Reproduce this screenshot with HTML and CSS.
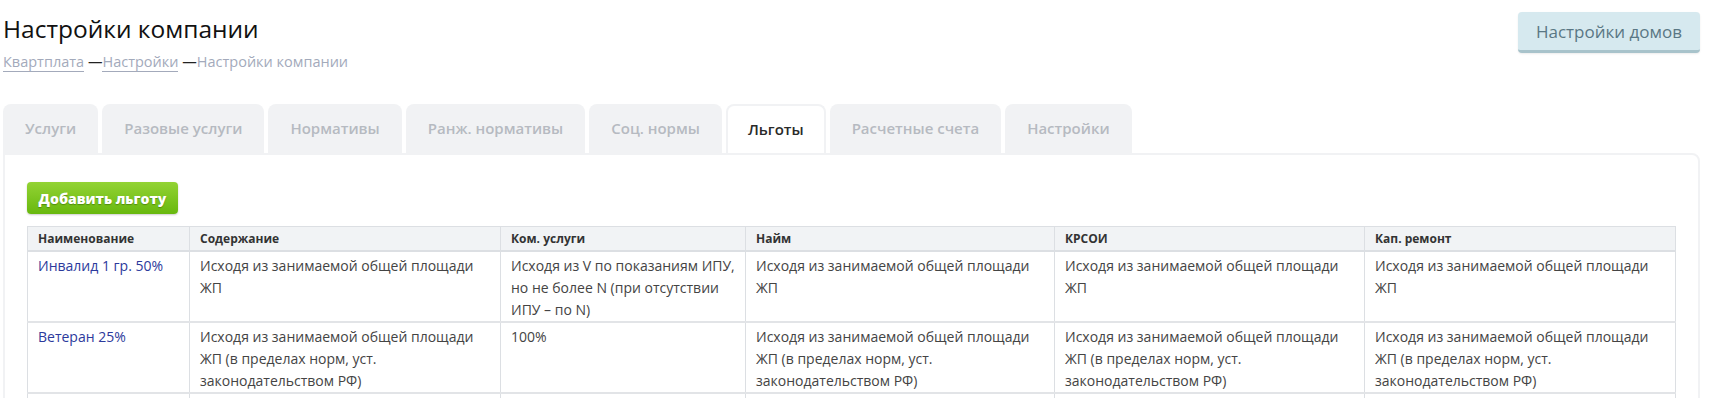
FILE: index.html
```html
<html>
<head>
    <title>Настройки компании</title>
    <link rel="stylesheet" href="styles.css">
</head>
<body>
<div class="page">
    <div class="topBar">
        <div>
            <h1>Настройки компании</h1>
            <div class="crumbs">
                <a href="#">Квартплата</a> <span class="dash">—</span><a href="#">Настройки</a> <span class="dash">—</span><span class="current">Настройки компании</span>
            </div>
        </div>
        <button class="housesBtn">Настройки домов</button>
    </div>

    <ul class="tabs">
        <li>Услуги</li>
        <li>Разовые услуги</li>
        <li>Нормативы</li>
        <li>Ранж. нормативы</li>
        <li>Соц. нормы</li>
        <li class="active">Льготы</li>
        <li>Расчетные счета</li>
        <li>Настройки</li>
    </ul>

    <div class="panel">
        <button class="addBtn">Добавить льготу</button>

        <table class="grid">
            <colgroup>
                <col style="width:162px">
                <col style="width:311px">
                <col style="width:245px">
                <col style="width:309px">
                <col style="width:310px">
                <col>
            </colgroup>
            <thead>
                <tr>
                    <th>Наименование</th>
                    <th>Содержание</th>
                    <th>Ком. услуги</th>
                    <th>Найм</th>
                    <th>КРСОИ</th>
                    <th>Кап. ремонт</th>
                </tr>
            </thead>
            <tbody>
                <tr>
                    <td><a href="#">Инвалид 1 гр. 50%</a></td>
                    <td>Исходя из занимаемой общей площади ЖП</td>
                    <td>Исходя из V по показаниям ИПУ, но не более N (при отсутствии ИПУ – по N)</td>
                    <td>Исходя из занимаемой общей площади ЖП</td>
                    <td>Исходя из занимаемой общей площади ЖП</td>
                    <td>Исходя из занимаемой общей площади ЖП</td>
                </tr>
                <tr>
                    <td><a href="#">Ветеран 25%</a></td>
                    <td>Исходя из занимаемой общей площади ЖП (в пределах норм, уст. законодательством РФ)</td>
                    <td>100%</td>
                    <td>Исходя из занимаемой общей площади ЖП (в пределах норм, уст. законодательством РФ)</td>
                    <td>Исходя из занимаемой общей площади ЖП (в пределах норм, уст. законодательством РФ)</td>
                    <td>Исходя из занимаемой общей площади ЖП (в пределах норм, уст. законодательством РФ)</td>
                </tr>
                <tr class="empty">
                    <td></td>
                    <td></td>
                    <td></td>
                    <td></td>
                    <td></td>
                    <td></td>
                </tr>
            </tbody>
        </table>
    </div>
</div>
</body>
</html>
```

FILE: styles.css
```css
body{
    margin: 0;
    background-color: #ffffff;
    font-family: "Open Sans", "Noto Sans", sans-serif;
    color: #444;
}

.page{
    padding: 0 9px 0 3px;
}

.topBar{
    display: flex;
    justify-content: space-between;
    align-items: flex-start;
}

h1{
    margin: 14px 0 0 0;
    font-size: 24.5px;
    font-weight: normal;
    color: #111;
    line-height: 30px;
}

.crumbs{
    margin-top: 8px;
    font-size: 14.5px;
    color: #a3aabb;
}

.crumbs a{
    color: #a3aabb;
    text-decoration: none;
    border-bottom: 1px solid #a3aabb;
}

.crumbs .dash{
    color: #222;
}

.housesBtn{
    margin-top: 12px;
    width: 182px;
    height: 41px;
    font-family: "Open Sans", sans-serif;
    font-size: 17px;
    color: #5a7784;
    background-color: #d6e9ef;
    border: none;
    border-bottom: 3px solid #a8c3cb;
    border-radius: 4px;
    box-shadow: 0 1px 2px rgba(0,0,0,0.08);
}

.tabs{
    list-style-type: none;
    padding: 0;
    margin: 33px 0 0 0;
    display: flex;
    gap: 4px;
}

.tabs li{
    height: 49px;
    line-height: 49px;
    padding: 0 22px;
    font-size: 15px;
    font-weight: 600;
    color: #b6bac1;
    background-color: #f1f2f4;
    border-radius: 8px 8px 0 0;
}

.tabs li.active{
    color: #2a2a2a;
    background-color: #ffffff;
    border: 2px solid #f1f2f4;
    border-bottom: none;
    height: 47px;
    line-height: 47px;
    padding: 0 20px;
}

.panel{
    border: 2px solid #f1f2f4;
    border-radius: 0 8px 0 0;
    padding: 27px 21px 20px 22px;
    background-color: #ffffff;
}

.addBtn{
    height: 32px;
    width: 151px;
    padding: 0;
    font-family: "Open Sans", sans-serif;
    font-size: 14px;
    font-weight: 800;
    color: #ffffff;
    text-shadow: 0 1px 1px rgba(40,80,0,0.45);
    background: linear-gradient(#93d334, #68b80e);
    border: none;
    border-radius: 4px;
    box-shadow: 0 1px 2px rgba(0,0,0,0.2);
}

.grid{
    margin-top: 12px;
    width: 1649px;
    table-layout: fixed;
    border-collapse: collapse;
    border: 1px solid #dcdfe3;
    font-size: 14px;
}

.grid th{
    height: 24px;
    padding: 0 10px;
    text-align: left;
    font-size: 12px;
    font-weight: 700;
    color: #333;
    background-color: #f1f3f5;
    border: 1px solid #dcdfe3;
    border-bottom: 2px solid #dcdfe3;
}

.grid td{
    vertical-align: top;
    padding: 3px 10px 0 10px;
    line-height: 22px;
    color: #444;
    border-left: 1px solid #dcdfe3;
    border-right: 1px solid #dcdfe3;
    border-bottom: 2px solid #e2e4e7;
}

.grid tr.empty td{
    height: 60px;
}

.grid td a{
    color: #2c3a9c;
    text-decoration: none;
}
```
